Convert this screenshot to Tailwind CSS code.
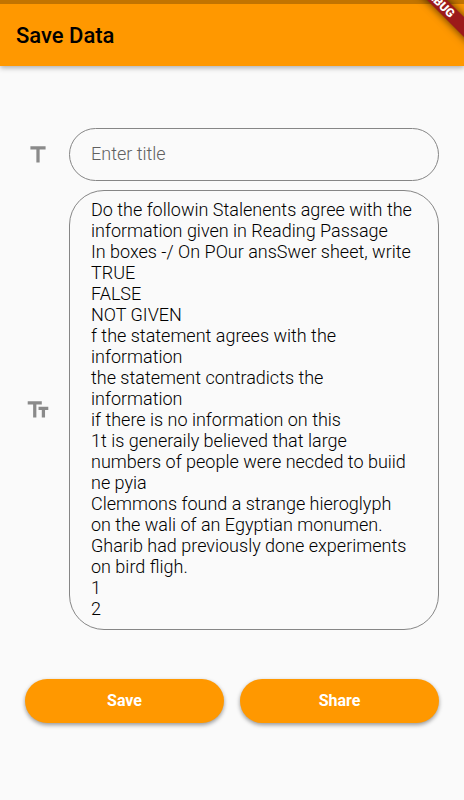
<!DOCTYPE html>
<html lang="en">
<head>
<meta charset="utf-8">
<meta name="viewport" content="width=device-width, initial-scale=1">
<title>Save Data</title>
<script src="https://cdn.jsdelivr.net/npm/@tailwindcss/browser@4"></script>
</head>
<body class="relative min-h-screen overflow-x-hidden bg-[#fafafa] font-['Roboto',sans-serif] text-black">
<header class="border-t-4 border-[#c27400] bg-[#ff9800] px-4 shadow-[0_2px_5px_rgba(0,0,0,0.3)]">
  <h1 class="flex h-[62px] items-center text-[22px] font-medium text-black">Save Data</h1>
</header>
<div class="pointer-events-none absolute top-0 right-0 size-20 overflow-hidden" aria-hidden="true">
  <div class="absolute top-[-5px] right-[-40px] flex h-[14px] w-[130px] rotate-45 items-center justify-center bg-[#9c1a1a] text-[12px] font-black text-white shadow-[0_0_8px_rgba(0,0,0,0.7)]">DEBUG</div>
</div>
<main class="px-[25px] pt-[62px]">
  <form>
    <div class="flex items-center gap-[18px]">
      <label for="title" aria-label="Title" class="shrink-0">
        <svg class="size-[26px] fill-[#8a8a8a]" viewBox="0 0 24 24"><path d="M5 4v3h5.5v12h3V7H19V4z"/></svg>
      </label>
      <input id="title" type="text" placeholder="Enter title" class="h-[53px] min-w-0 flex-1 rounded-full border border-[#868686] bg-transparent px-[21px] pb-0.5 text-[18px] font-[350] outline-none placeholder:text-[#606060]">
    </div>
    <div class="mt-[9px] flex items-center gap-[18px]">
      <label for="content" aria-label="Text" class="shrink-0">
        <svg class="size-[26px] fill-[#8a8a8a]" viewBox="0 0 24 24"><path d="M2.5 4v3h5v12h3V7h5V4h-13zm19 5h-9v3h3v7h3v-7h3V9z"/></svg>
      </label>
      <textarea id="content" rows="20" class="block min-w-0 flex-1 resize-none overflow-hidden rounded-[35px] border border-[#868686] bg-transparent px-[21px] pt-2 pb-[10px] text-[18px] leading-[21px] font-[350] outline-none">Do the followin Stalenents agree with the
information given in Reading Passage
In boxes -/ On POur ansSwer sheet, write
TRUE
FALSE
NOT GIVEN
f the statement agrees with the
information
the statement contradicts the
information
if there is no information on this
1t is generaily believed that large
numbers of people were necded to buiid
ne pyia
Clemmons found a strange hieroglyph
on the wali of an Egyptian monumen.
Gharib had previously done experiments
on bird fligh.
1
2</textarea>
    </div>
    <div class="mt-[49px] grid grid-cols-2 gap-4">
      <button type="button" class="h-11 rounded-full bg-[#ff9800] text-[16px] font-bold text-white shadow-[0_2px_4px_rgba(0,0,0,0.4)]">Save</button>
      <button type="button" class="h-11 rounded-full bg-[#ff9800] text-[16px] font-bold text-white shadow-[0_2px_4px_rgba(0,0,0,0.4)]">Share</button>
    </div>
  </form>
</main>
</body>
</html>
